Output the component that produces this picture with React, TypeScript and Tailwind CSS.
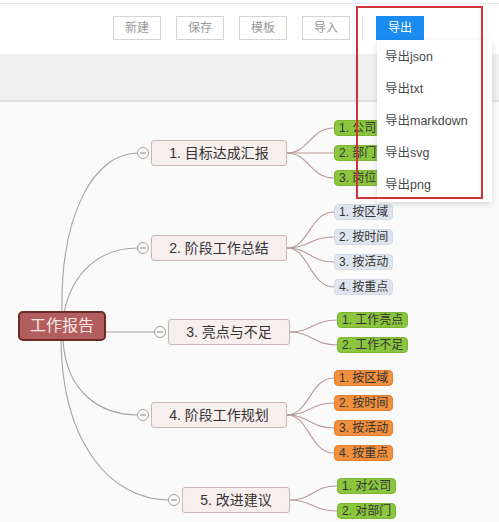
import React from 'react';

const FONT = { fontFamily: '"Liberation Sans", "Noto Sans CJK SC", sans-serif' };
const TOP = 102;

type Leaf = { label: string; y: number };
type Branch = {
  label: string;
  x: number;
  w: number;
  cy: number;
  leafX: number;
  tone: 'green' | 'blue' | 'orange';
  leaves: Leaf[];
};

const BRANCHES: Branch[] = [
  { label: '1. 目标达成汇报', x: 151, w: 136, cy: 153, leafX: 334, tone: 'green', leaves: [
    { label: '1. 公司', y: 128 }, { label: '2. 部门', y: 153 }, { label: '3. 岗位', y: 178 },
  ] },
  { label: '2. 阶段工作总结', x: 151, w: 136, cy: 248, leafX: 334, tone: 'blue', leaves: [
    { label: '1. 按区域', y: 212 }, { label: '2. 按时间', y: 237 }, { label: '3. 按活动', y: 262 }, { label: '4. 按重点', y: 287 },
  ] },
  { label: '3. 亮点与不足', x: 168, w: 122, cy: 332, leafX: 337, tone: 'green', leaves: [
    { label: '1. 工作亮点', y: 320 }, { label: '2. 工作不足', y: 345 },
  ] },
  { label: '4. 阶段工作规划', x: 151, w: 136, cy: 415, leafX: 334, tone: 'orange', leaves: [
    { label: '1. 按区域', y: 378 }, { label: '2. 按时间', y: 403 }, { label: '3. 按活动', y: 428 }, { label: '4. 按重点', y: 453 },
  ] },
  { label: '5. 改进建议', x: 182, w: 108, cy: 500, leafX: 337, tone: 'green', leaves: [
    { label: '1. 对公司', y: 486 }, { label: '2. 对部门', y: 511 },
  ] },
];

const TONES = {
  green: 'bg-[#8cc63e] border-[#7cb434]',
  blue: 'bg-[#dfe5ee] border-[#d3dae5]',
  orange: 'bg-[#f2903e] border-[#e07f30]',
};

const ROOT_PATHS = [
  'M62 211 C60 110, 95 51, 138 51',
  'M64 211 C72 170, 100 146, 138 146',
  'M106 230 L156 230',
  'M63 238 C66 290, 100 313, 138 313',
  'M61 238 C62 340, 110 398, 169 398',
];

function MindMap() {
  return (
    <div className="relative flex-1 bg-[#fbfafa]">
      <svg className="absolute left-0 top-0" width="499" height="420" viewBox="0 0 499 420" fill="none">
        {ROOT_PATHS.map((d) => (
          <path key={d} d={d} stroke="#a8a0a0" strokeWidth="1.1" />
        ))}
        {BRANCHES.map((b) =>
          b.leaves.map((l) => {
            const x1 = b.x + b.w;
            const y1 = b.cy - TOP;
            const x2 = b.leafX;
            const y2 = l.y - TOP;
            return (
              <path
                key={b.label + l.label}
                d={`M${x1} ${y1} C${x1 + 22} ${y1}, ${x2 - 24} ${y2}, ${x2} ${y2}`}
                stroke="#b89a9a"
                strokeWidth="1.1"
              />
            );
          })
        )}
        {BRANCHES.map((b) => (
          <g key={b.label}>
            <circle cx={b.x - 8} cy={b.cy - TOP} r="5.5" fill="#fbfafa" stroke="#a8a0a0" />
            <line x1={b.x - 11} y1={b.cy - TOP} x2={b.x - 5} y2={b.cy - TOP} stroke="#888" />
          </g>
        ))}
      </svg>

      <div className="absolute left-[18px] top-[209px] flex h-[30px] w-[88px] items-center justify-center rounded-[5px] border-2 border-[#6e2a2a] bg-[#b35e5e] text-[16px] text-[#fbe6e6]">
        工作报告
      </div>

      {BRANCHES.map((b) => (
        <div
          key={b.label}
          className="absolute flex h-[26px] items-center justify-center rounded-[3px] border border-[#cbb5b5] bg-[#f7eeee] text-[14px] text-[#333]"
          style={{ left: b.x, top: b.cy - TOP - 13, width: b.w }}
        >
          {b.label}
        </div>
      ))}

      {BRANCHES.map((b) =>
        b.leaves.map((l) => (
          <div
            key={b.label + l.label}
            className={`absolute flex h-[16px] items-center rounded-[4px] border px-[4px] text-[12px] leading-none text-[#333] ${TONES[b.tone]}`}
            style={{ left: b.leafX, top: l.y - TOP - 8 }}
          >
            {l.label}
          </div>
        ))
      )}
    </div>
  );
}

export default function App() {
  const tools = ['新建', '保存', '模板', '导入'];
  const exports = ['导出json', '导出txt', '导出markdown', '导出svg', '导出png'];
  return (
    <div className="relative flex h-[522px] w-[499px] flex-col overflow-hidden bg-white" style={FONT}>
      <div className="mt-[3px] flex h-[51px] items-start border-t border-[#e8e8e8] bg-white pt-[12px]">
        <div className="ml-[113px] flex gap-[15px]">
          {tools.map((t) => (
            <button
              key={t}
              className="h-[24px] w-[48px] border border-[#d4d4d4] bg-white text-[12px] text-[#999]"
            >
              {t}
            </button>
          ))}
        </div>
        <div className="ml-[12px] h-[24px] w-px bg-[#e6e6e6]" />
        <button className="ml-[13px] h-[24px] w-[48px] bg-[#1a8cf0] text-[12px] text-white">导出</button>
      </div>
      <div className="h-[48px] border-b-2 border-[#e2e2e2] bg-[#f0f0f0]" />
      <MindMap />

      <div className="absolute left-[377px] top-[40px] flex w-[115px] flex-col bg-white py-[1px] shadow-[0_2px_6px_rgba(0,0,0,0.15)]">
        {exports.map((e) => (
          <div key={e} className="flex h-[32px] items-center pl-[8px] text-[12.5px] text-[#4a4a4a]">
            {e}
          </div>
        ))}
      </div>

      <div className="pointer-events-none absolute left-[356px] top-[6px] h-[193px] w-[127px] border-2 border-[#d2333a]" />
    </div>
  );
}
